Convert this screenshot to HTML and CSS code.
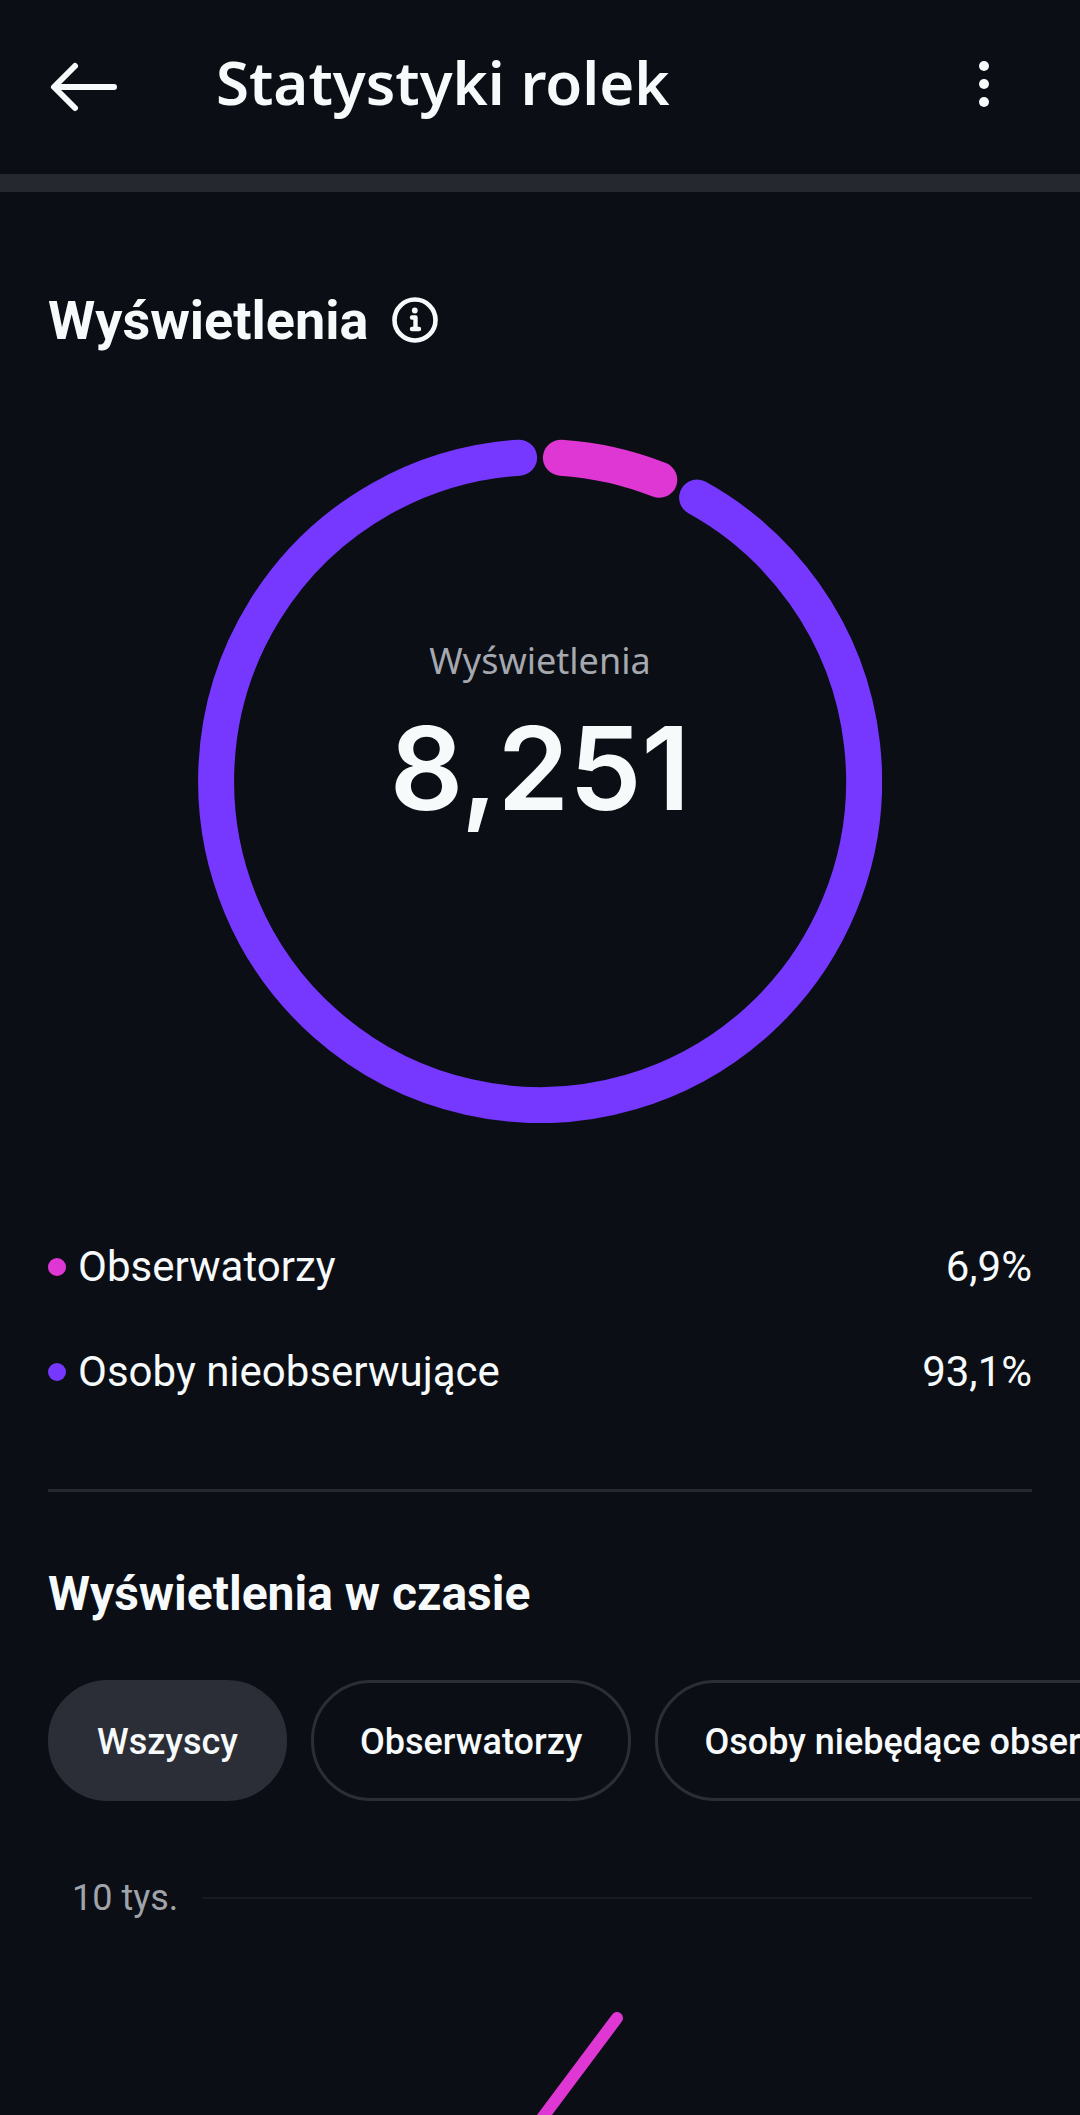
FILE: index.html
```html
<!DOCTYPE html>
<html lang="pl">
<head>
    <meta charset="UTF-8">
    <meta name="viewport" content="width=device-width, initial-scale=1.0">
    <title>Statystyki rolek</title>
    <link rel="stylesheet" href="styles.css">
</head>
<body>
    <header class="topbar">
        <button class="icon-btn" type="button" aria-label="Wstecz">
            <svg width="72" height="54" viewBox="0 0 72 54" fill="none" stroke="currentColor" stroke-width="6" stroke-linecap="round" stroke-linejoin="round">
                <path d="M27 6 6 27l21 21M7 27h59"/>
            </svg>
        </button>
        <h1>Statystyki rolek</h1>
        <button class="icon-btn" type="button" aria-label="Więcej opcji">
            <svg width="72" height="54" viewBox="0 0 72 54" fill="currentColor">
                <circle cx="24" cy="6" r="5"/>
                <circle cx="24" cy="24" r="5"/>
                <circle cx="24" cy="42" r="5"/>
            </svg>
        </button>
    </header>

    <main>
        <section class="views">
            <div class="section-title">
                <h2>Wyświetlenia</h2>
                <button class="icon-btn" type="button" aria-label="Informacje">
                    <svg width="48" height="48" viewBox="0 0 48 48" fill="none" stroke="currentColor" stroke-linecap="round" stroke-linejoin="round">
                        <circle cx="23" cy="23" r="20.5" stroke-width="4.6"/>
                        <path d="M20 20.5h3.5V32M20 32h7" stroke-width="4.4"/>
                        <circle cx="22.8" cy="13.5" r="2.9" fill="currentColor" stroke="none"/>
                    </svg>
                </button>
            </div>

            <div class="donut">
                <svg class="donut-ring" viewBox="0 0 684 684" fill="none" stroke-width="36" stroke-linecap="round">
                    <path class="non-followers" d="M499.1 58.6A324 324 0 1 1 321.1 18.7"/>
                    <path class="followers" d="M362.9 18.7A324 324 0 0 1 461.3 40.8"/>
                </svg>
                <div class="donut-label">
                    <span>Wyświetlenia</span>
                    <strong>8,251</strong>
                </div>
            </div>

            <ul class="legend">
                <li><span class="dot dot-pink"></span>Obserwatorzy<span class="value">6,9%</span></li>
                <li><span class="dot dot-purple"></span>Osoby nieobserwujące<span class="value">93,1%</span></li>
            </ul>
        </section>

        <section class="timeline">
            <h3>Wyświetlenia w czasie</h3>
            <div class="chips">
                <button class="chip active" type="button">Wszyscy</button>
                <button class="chip" type="button">Obserwatorzy</button>
                <button class="chip" type="button">Osoby niebędące obserwatorami</button>
            </div>
            <div class="axis">
                <span>10 tys.</span>
                <div class="gridline"></div>
            </div>
            <svg class="chart" viewBox="0 0 984 108" fill="none" stroke-width="12" stroke-linecap="round">
                <path class="followers" d="M569 11 480 130"/>
            </svg>
        </section>
    </main>
</body>
</html>
```
FILE: styles.css
```css
* {
    box-sizing: border-box;
}
body {
    margin: 0;
    background-color: #0b0e15;
    color: #f7fafb;
    font-family: Roboto, sans-serif;
    overflow-x: hidden;
}
h1, h2, h3, ul {
    margin: 0;
    padding: 0;
}
button {
    font-family: inherit;
    color: inherit;
    cursor: pointer;
}
.icon-btn {
    padding: 0;
    border: none;
    background: none;
}
.icon-btn svg {
    display: block;
}
.topbar {
    display: flex;
    align-items: center;
    padding: 48px;
    height: 192px;
    border-bottom: 18px solid #25282f;
}
.topbar h1 {
    flex: 1;
    margin-left: 96px;
    padding-bottom: 10px;
    font-family: "Noto Sans", sans-serif;
    font-size: 60px;
    font-weight: 600;
    line-height: 72px;
}
.views {
    margin: 0 48px;
    padding: 96px 0 93px;
    border-bottom: 3px solid #25282f;
}
.section-title {
    display: flex;
    align-items: center;
    gap: 24px;
}
.section-title h2 {
    font-size: 54px;
    line-height: 66px;
}
.donut {
    display: grid;
    justify-items: center;
    margin-top: 85px;
}
.donut-ring, .donut-label {
    grid-area: 1 / 1;
}
.donut-ring {
    width: 70%;
    max-width: 684px;
}
.donut-label {
    display: flex;
    flex-direction: column;
    align-items: center;
    gap: 6px;
    padding-top: 198px;
}
.donut-label span {
    color: #a5a8af;
    font-family: "Noto Sans", sans-serif;
    font-size: 36px;
    line-height: 48px;
}
.donut-label strong {
    font-family: Inter, sans-serif;
    font-size: 115px;
    font-weight: 600;
    line-height: 156px;
}
.followers {
    stroke: #df37d3;
}
.non-followers {
    stroke: #7638ff;
}
.legend {
    margin-top: 120px;
    list-style: none;
    font-size: 42px;
    line-height: 48px;
}
.legend li {
    display: flex;
    align-items: center;
    gap: 12px;
}
.legend li + li {
    margin-top: 57px;
}
.dot {
    width: 18px;
    height: 18px;
    border-radius: 50%;
}
.dot-pink {
    background-color: #df37d3;
}
.dot-purple {
    background-color: #7638ff;
}
.value {
    margin-left: auto;
}
.timeline {
    padding: 72px 48px 0;
}
.timeline h3 {
    font-size: 48px;
    line-height: 60px;
}
.chips {
    display: flex;
    gap: 24px;
    margin: 56px -48px 0 0;
    overflow: hidden;
}
.chip {
    flex: none;
    height: 121px;
    padding: 2px 46px 0;
    border: 3px solid #2b2e36;
    border-radius: 60px;
    background: none;
    font-size: 36px;
    font-weight: 500;
}
.chip.active {
    background-color: #2b2e36;
}
.axis {
    display: flex;
    align-items: center;
    gap: 24px;
    margin-top: 73px;
    padding-left: 24px;
    color: #a0a3a9;
    font-size: 36px;
    line-height: 48px;
}
.gridline {
    flex: 1;
    height: 2px;
    background-color: #171a21;
}
.chart {
    display: block;
    width: 100%;
    margin-top: 85px;
}
```
